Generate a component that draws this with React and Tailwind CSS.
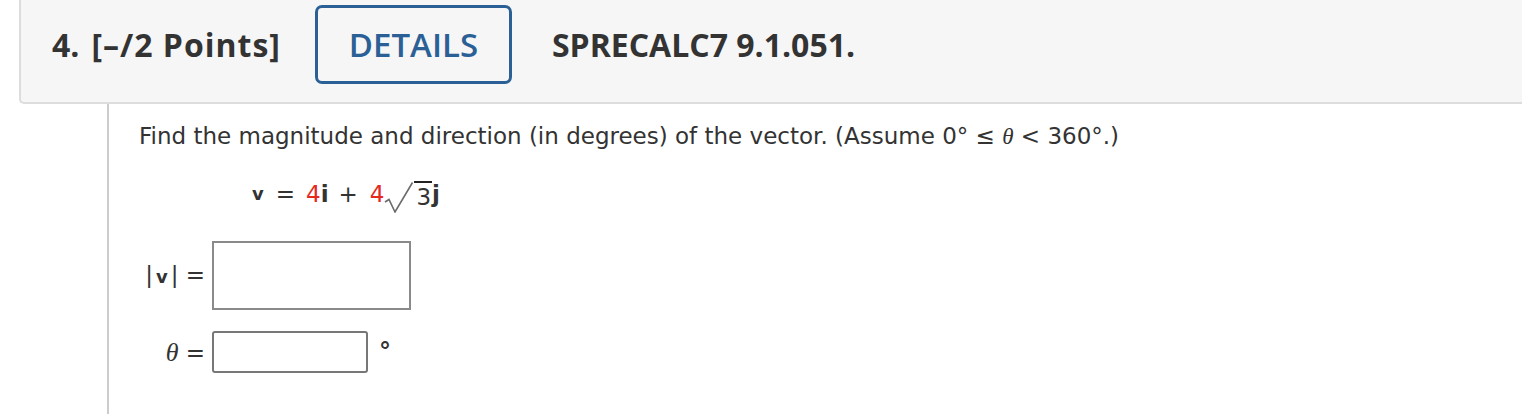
export default function App() {
  const body = { fontFamily: '"DejaVu Sans", Verdana, sans-serif' };
  const serif = { fontFamily: '"Liberation Serif", "DejaVu Serif", serif' };
  return (
    <div className="w-[1522px] h-[414px] bg-white overflow-hidden">
      <div
        className="ml-[19px] h-[104px] bg-[#f6f6f6] border-l-2 border-b-2 border-[#dddddd] rounded-bl-[5px] flex items-start pt-[5px] pl-[31px]"
        style={{ fontFamily: '"Open Sans", sans-serif' }}
      >
        <div className="h-[79px] flex items-center text-[32px] font-bold text-[#333333]">
          <span>4.</span>
          <span className="ml-[12px] tracking-[1px]">[–/2 Points]</span>
        </div>
        <div className="ml-[34px] w-[197px] h-[79px] border-[3px] border-[#2a6095] rounded-[7px] flex items-center justify-center text-[33px] font-semibold text-[#2a6095]">
          DETAILS
        </div>
        <div className="ml-[40px] h-[79px] flex items-center text-[32px] font-bold text-[#333333]">
          SPRECALC7 9.1.051.
        </div>
      </div>
      <div className="ml-[107px] h-[310px] border-l-2 border-[#cccccc] pl-[30px] pt-[16px] text-[#333333]" style={body}>
        <div className="text-[23px] leading-[32px]">
          Find the magnitude and direction (in degrees) of the vector. (Assume 0° ≤{' '}
          <span className="italic" style={serif}>θ</span> &lt; 360°.)
        </div>
        <div className="ml-[113px] mt-[24px] h-[34px] flex items-end text-[23px] leading-[34px]">
          <span className="font-bold text-[18px]">v</span>
          <span className="ml-[12px]">=</span>
          <span className="ml-[11px] text-[#e42a1d]">4</span>
          <span className="font-bold">i</span>
          <span className="ml-[10px]">+</span>
          <span className="ml-[12px] text-[#e42a1d]">4</span>
          <span className="inline-flex items-start">
            <svg width="30" height="32" viewBox="0 0 30 32" className="mb-[-3px]">
              <path d="M1 21 L5 18.5 L11 31 L28.5 1.5" fill="none" stroke="#6b6b6b" strokeWidth="1.6" />
            </svg>
            <span className="border-t-2 border-[#222] leading-[28px] pl-[2px] pr-[1px]">3</span>
          </span>
          <span className="font-bold">j</span>
        </div>
        <div className="mt-[30px] flex items-center">
          <div className="w-[67px] text-right text-[23px] pr-[1px] whitespace-nowrap">
            |<span className="font-bold text-[18px] px-[3px]">v</span>| =
          </div>
          <div className="ml-[6px] w-[199px] h-[69px] border-2 border-[#8a8a8a] bg-white"></div>
        </div>
        <div className="mt-[21px] flex items-center">
          <div className="w-[67px] text-right text-[23px] pr-[1px]">
            <span className="italic text-[26px]" style={serif}>θ</span> =
          </div>
          <div className="ml-[6px] w-[156px] h-[42px] border-2 border-[#777777] rounded-[3px] bg-white"></div>
          <div className="ml-[11px] mb-[1px] text-[24px] font-bold">°</div>
        </div>
      </div>
    </div>
  );
}
